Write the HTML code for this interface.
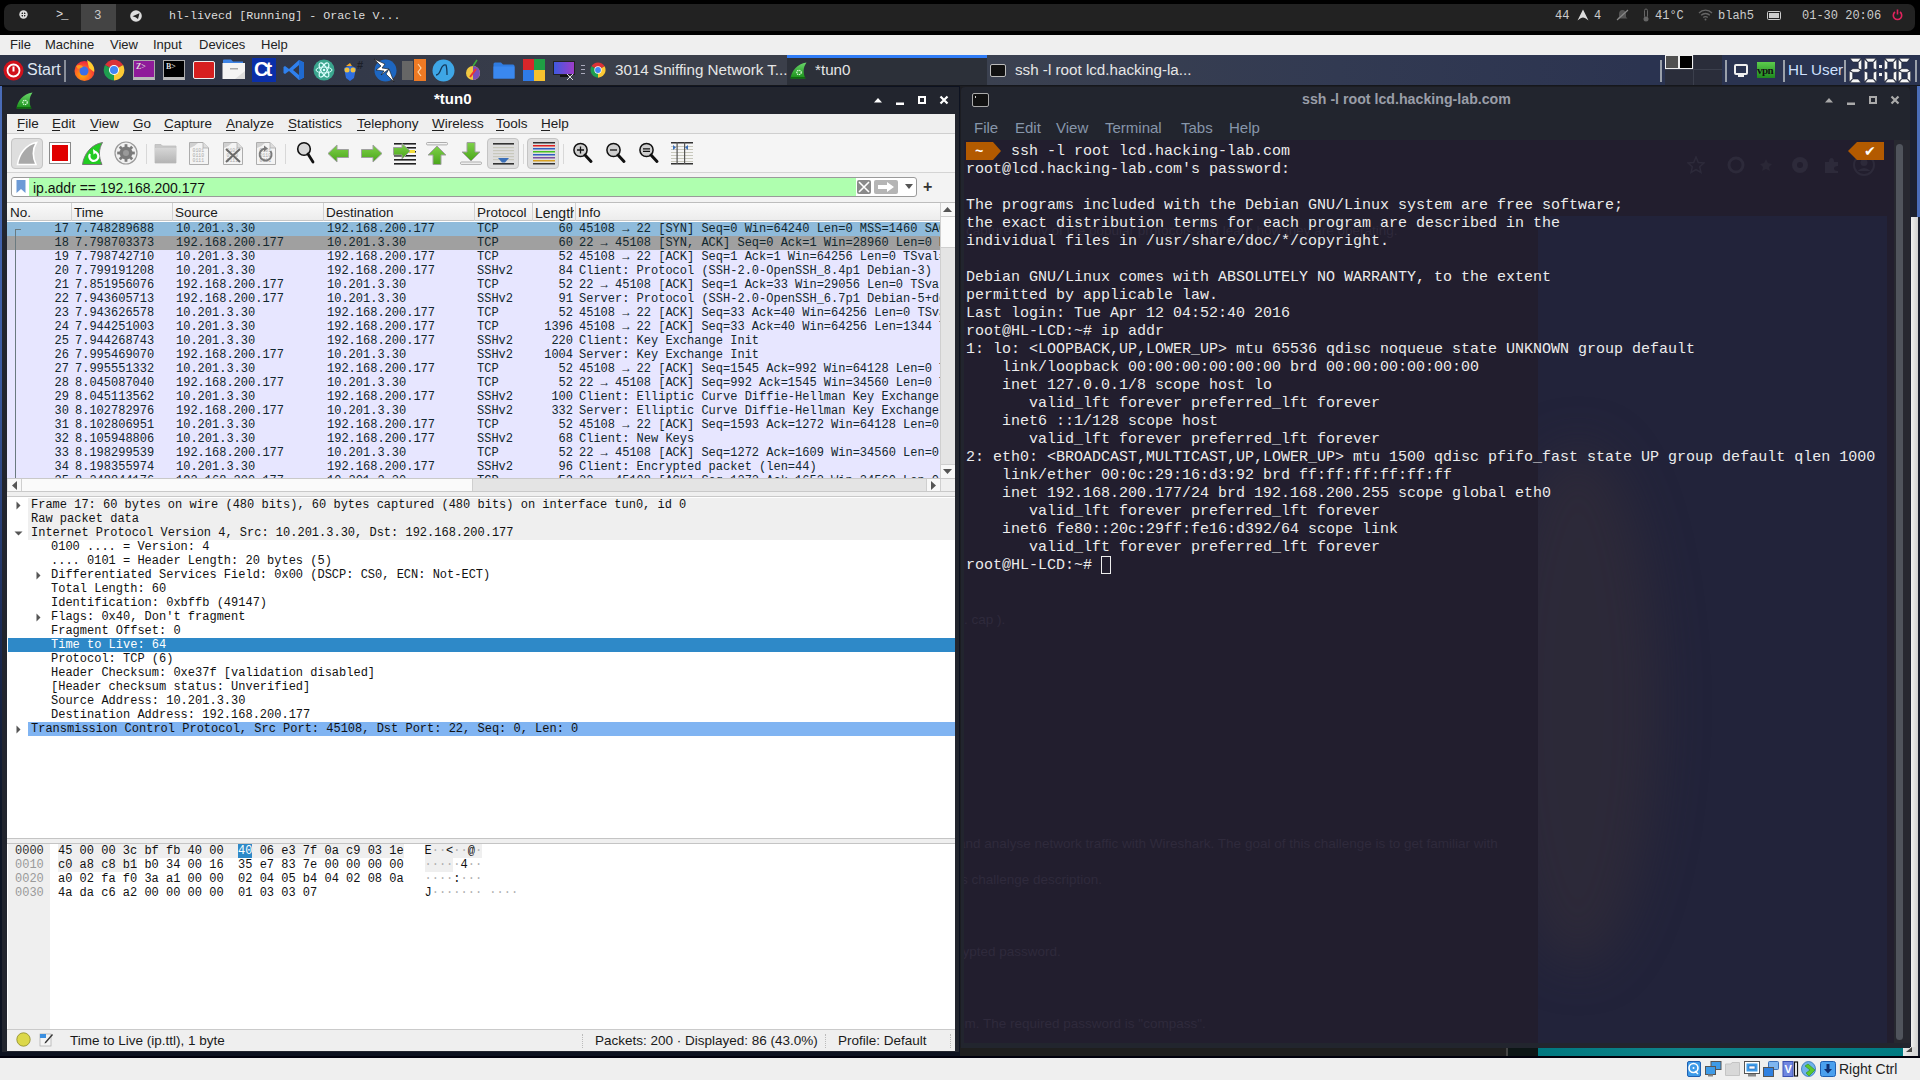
<!DOCTYPE html><html><head><meta charset="utf-8"><style>
html,body{margin:0;padding:0;width:1920px;height:1080px;overflow:hidden;background:#000;}
div{box-sizing:border-box;}
.t{position:absolute;white-space:pre;line-height:1;}
.s{font-family:'Liberation Sans',sans-serif;}
.m{font-family:'Liberation Mono',monospace;}
</style></head><body>

<div style="position:absolute;left:0px;top:0px;width:1920px;height:35px;background:#000"></div>
<div style="position:absolute;left:4px;top:4px;width:1911px;height:27px;background:#222;border-radius:7px"></div>
<div style="position:absolute;left:81px;top:4px;width:35px;height:27px;background:#444"></div>
<div class="t" style="left:94px;top:9px;font:12.5px 'Liberation Mono';color:#ccc">3</div>
<div class="t" style="left:56px;top:8px;font:12px 'Liberation Mono';color:#ddd;letter-spacing:-2px">&gt;_</div>
<svg style="position:absolute;left:19px;top:10px" width="9" height="9" viewBox="0 0 9 9"><circle cx="4.5" cy="4.5" r="4.2" fill="#ddd"/><circle cx="4.5" cy="4.5" r="2.2" fill="#222"/><path d="M4.5 2 L4.5 7 M2 4.5 L7 4.5" stroke="#ddd" stroke-width="1"/></svg>
<svg style="position:absolute;left:130px;top:10px" width="12" height="12" viewBox="0 0 12 12"><circle cx="6" cy="6" r="5.8" fill="#ddd"/><path d="M2.5 6.2 L9.5 3.2 L8 9 L5.5 7.2 Z" fill="#222"/></svg>
<div class="t" style="left:169px;top:9px;font:11.7px 'Liberation Mono';color:#ddd">hl-livecd [Running] - Oracle V...</div>
<div class="t" style="left:1555px;top:9px;font:12px 'Liberation Mono';color:#ccc">44</div>
<svg style="position:absolute;left:1577px;top:9px" width="12" height="12" viewBox="0 0 12 12"><path d="M6 0.5 L11.5 11.5 Q8 8.5 6 8.5 Q4 8.5 0.5 11.5Z" fill="#ddd"/></svg>
<div class="t" style="left:1594px;top:9px;font:12px 'Liberation Mono';color:#ccc">4</div>
<svg style="position:absolute;left:1616px;top:9px" width="13" height="12" viewBox="0 0 13 12"><path d="M6.5 1 C4 1 3 3 3 5 L3 8 L1.5 9.5 L11.5 9.5 L10 8 L10 5 C10 3 9 1 6.5 1Z" fill="#555"/><line x1="1" y1="11" x2="12" y2="1" stroke="#888" stroke-width="1.2"/></svg>
<svg style="position:absolute;left:1642px;top:8px" width="8" height="14" viewBox="0 0 8 14"><rect x="2.5" y="1" width="3" height="9" rx="1.5" fill="none" stroke="#666" stroke-width="1"/><circle cx="4" cy="11" r="2.5" fill="#666"/></svg>
<div class="t" style="left:1655px;top:9px;font:12px 'Liberation Mono';color:#ccc">41°C</div>
<svg style="position:absolute;left:1698px;top:8px" width="15" height="13" viewBox="0 0 15 13"><path d="M1 5 A9 9 0 0 1 14 5" fill="none" stroke="#666" stroke-width="1.3"/><path d="M3.2 7.3 A6 6 0 0 1 11.8 7.3" fill="none" stroke="#666" stroke-width="1.3"/><path d="M5.3 9.5 A3 3 0 0 1 9.7 9.5" fill="none" stroke="#666" stroke-width="1.3"/><circle cx="7.5" cy="11.5" r="1" fill="#666"/></svg>
<div class="t" style="left:1718px;top:9px;font:12px 'Liberation Mono';color:#ccc">blah5</div>
<svg style="position:absolute;left:1767px;top:11px" width="15" height="9" viewBox="0 0 15 9"><rect x="0.5" y="0.5" width="13" height="8" rx="1" fill="none" stroke="#ccc"/><rect x="2" y="2" width="10" height="5" fill="#ccc"/></svg>
<div class="t" style="left:1802px;top:9px;font:12px 'Liberation Mono';color:#ccc">01-30 20:06</div>
<svg style="position:absolute;left:1892px;top:9px" width="11" height="12" viewBox="0 0 11 12"><path d="M3 3 A4.2 4.2 0 1 0 8 3" fill="none" stroke="#e0245e" stroke-width="1.6"/><line x1="5.5" y1="0.5" x2="5.5" y2="5.5" stroke="#e0245e" stroke-width="1.6"/></svg>
<div style="position:absolute;left:0px;top:35px;width:1920px;height:20px;background:#efefef"></div>
<div class="t" style="left:10px;top:37px;font:13px 'Liberation Sans';color:#222">File</div>
<div class="t" style="left:45px;top:37px;font:13px 'Liberation Sans';color:#222">Machine</div>
<div class="t" style="left:110px;top:37px;font:13px 'Liberation Sans';color:#222">View</div>
<div class="t" style="left:153px;top:37px;font:13px 'Liberation Sans';color:#222">Input</div>
<div class="t" style="left:199px;top:37px;font:13px 'Liberation Sans';color:#222">Devices</div>
<div class="t" style="left:261px;top:37px;font:13px 'Liberation Sans';color:#222">Help</div>
<div style="position:absolute;left:0px;top:55px;width:1920px;height:31px;background:linear-gradient(90deg,#2a3145,#2c344a 50%,#2d3650)"></div>
<div style="position:absolute;left:0px;top:55px;width:600px;height:30px;background:linear-gradient(90deg,#2c3347,#333949 60%,#3a3e4a)"></div>
<div style="position:absolute;left:600px;top:55px;width:187px;height:30px;background:#3b3f4a"></div>
<div style="position:absolute;left:787px;top:55px;width:200px;height:30px;background:#2c3039"></div>
<div style="position:absolute;left:787px;top:55px;width:200px;height:3px;background:#2f7cf6"></div>
<div style="position:absolute;left:987px;top:55px;width:700px;height:30px;background:linear-gradient(90deg,#3b4150,#323a52 50%,#2b3350)"></div>
<div style="position:absolute;left:1640px;top:55px;width:280px;height:30px;background:#2a3350"></div>
<div style="position:absolute;left:0px;top:85px;width:1920px;height:2px;background:#15171c"></div>
<svg style="position:absolute;left:3px;top:60px" width="21" height="21" viewBox="0 0 21 21"><circle cx="10.5" cy="10.5" r="10" fill="#d0111b"/><circle cx="10.5" cy="10.5" r="6" fill="none" stroke="#fff" stroke-width="1.8"/><line x1="10.5" y1="6.5" x2="10.5" y2="11.5" stroke="#fff" stroke-width="2"/></svg>
<div class="t" style="left:27px;top:61px;font:16px 'Liberation Sans';color:#dfe6f2">Start</div>
<div style="position:absolute;left:64px;top:60px;width:2px;height:22px;background:#8a8f9a"></div>
<svg style="position:absolute;left:73px;top:58px" width="23" height="24" viewBox="0 0 23 24">
<defs><radialGradient id="ff" cx="0.4" cy="0.7" r="0.7"><stop offset="0" stop-color="#ffb000"/><stop offset="0.6" stop-color="#ff5a2a"/><stop offset="1" stop-color="#e8243f"/></radialGradient></defs>
<circle cx="11.5" cy="13" r="10" fill="url(#ff)"/><circle cx="11" cy="13" r="4.5" fill="#3b6ee8"/><path d="M14 2 C20 5 22 10 21 14 L16 10 Z" fill="#ffcd2e"/><path d="M3 8 C6 6 9 7 10 9 L5 11Z" fill="#ff9a1f"/></svg>
<svg style="position:absolute;left:103px;top:59px" width="22" height="22" viewBox="0 0 22 22">
<path d="M11 11 L2 6 A10.5 10.5 0 0 1 20.1 6 Z" fill="#db3236"/>
<path d="M11 11 L20.1 6 A10.5 10.5 0 0 1 11 21.5 Z" fill="#fcc934"/>
<path d="M11 11 L11 21.5 A10.5 10.5 0 0 1 2 6 Z" fill="#1e9e4f"/>
<circle cx="11" cy="11" r="5" fill="#fff"/><circle cx="11" cy="11" r="4" fill="#4285f4"/></svg>
<div style="position:absolute;left:133px;top:60px;width:22px;height:20px;background:#8f1b9a;border:1px solid #aaa;border-bottom:3px solid #bbb"></div>
<div class="t" style="left:136px;top:62px;font:bold 8px 'Liberation Serif';color:#ddd">Z&gt;</div>
<div style="position:absolute;left:163px;top:60px;width:22px;height:20px;background:#000;border:1px solid #aaa;border-bottom:3px solid #bbb"></div>
<div class="t" style="left:166px;top:62px;font:bold 8px 'Liberation Serif';color:#ddd">B&gt;</div>
<div style="position:absolute;left:193px;top:61px;width:22px;height:18px;background:#d61f1f;border:1px solid #eee;border-radius:2px"></div>
<svg style="position:absolute;left:222px;top:59px" width="24" height="21" viewBox="0 0 24 21"><path d="M1 3 L1 1.5 Q1 0.5 2 0.5 L9 0.5 L11 2.5 L21 2.5 L21 5 L1 5Z" fill="#3e84e6"/><path d="M0.5 4 L23 4 L23 20 L0.5 20Z" fill="#f4f4f4"/><path d="M23 12 L23 20 L13 20Z" fill="#ddd"/><rect x="8" y="9" width="8" height="1.5" fill="#aaa"/></svg>
<div style="position:absolute;left:252px;top:58px;width:24px;height:24px;background:#0a2fa8"></div>
<div class="t" style="left:254px;top:58px;font:bold 20px 'Liberation Sans';color:#fff;letter-spacing:-3px">Ct</div>
<svg style="position:absolute;left:283px;top:59px" width="22" height="22" viewBox="0 0 22 22"><path d="M16 1 L21 3.5 L21 18.5 L16 21 L6 12 L2 15 L0.5 14 L0.5 8 L2 7 L6 10 Z M16 6 L10 11 L16 16 Z" fill="#2f80ed"/><path d="M16 1 L21 3.5 L21 18.5 L16 21Z" fill="#1f6ad0"/></svg>
<svg style="position:absolute;left:313px;top:59px" width="22" height="22" viewBox="0 0 22 22"><circle cx="11" cy="11" r="10.5" fill="#3aa58e"/><ellipse cx="11" cy="11" rx="8" ry="3" fill="none" stroke="#dff" stroke-width="1"/><ellipse cx="11" cy="11" rx="8" ry="3" fill="none" stroke="#dff" stroke-width="1" transform="rotate(60 11 11)"/><ellipse cx="11" cy="11" rx="8" ry="3" fill="none" stroke="#dff" stroke-width="1" transform="rotate(-60 11 11)"/><circle cx="11" cy="11" r="1.3" fill="#dff"/></svg>
<svg style="position:absolute;left:342px;top:58px" width="24" height="24" viewBox="0 0 24 24"><path d="M4 8 L8 5 L10 8 Z" fill="#f5a623"/><path d="M2 10 Q8 6 14 10 L12 20 L8 23 L4 20 Z" fill="#2f6fe0"/><circle cx="5" cy="12" r="2.5" fill="#f0c040"/><circle cx="11" cy="12" r="2.5" fill="#f0c040"/><text x="15" y="11" font-family='Liberation Sans' font-weight="bold" font-size="11" fill="#1c1f28">#</text></svg>
<svg style="position:absolute;left:372px;top:58px" width="25" height="25" viewBox="0 0 25 25"><circle cx="13.5" cy="12.5" r="11" fill="#1d66c1"/><path d="M2 1 L13 6 L10 10 L17 11 L9 17 L12 13 L4 12 L9 8 Z" fill="#fff" stroke="#111" stroke-width="0.6"/><path d="M17 11 L22 24 L14 16Z" fill="#fff" stroke="#111" stroke-width="0.6"/></svg>
<svg style="position:absolute;left:402px;top:58px" width="24" height="24" viewBox="0 0 24 24"><rect x="0" y="3" width="11" height="19" fill="#666"/><rect x="12" y="1" width="12" height="22" fill="#ee7a24"/><path d="M16 6 L19 10 L16 14 L19 18" fill="none" stroke="#ffd7a8" stroke-width="1.2"/></svg>
<svg style="position:absolute;left:432px;top:59px" width="23" height="23" viewBox="0 0 23 23"><circle cx="11.5" cy="11.5" r="11" fill="#3ea6e6"/><path d="M4 16 Q7 16 9 10 Q11 5 14 6 Q15 9 15 16" fill="none" stroke="#143a5c" stroke-width="1.3"/></svg>
<svg style="position:absolute;left:465px;top:58px" width="18" height="24" viewBox="0 0 18 24"><circle cx="8" cy="15" r="7" fill="#f0c842"/><path d="M8 8 A7 7 0 0 1 8 22Z" fill="#7b4fb8"/><path d="M8 8 L12 2" stroke="#3cae3c" stroke-width="1.5"/><path d="M5 19 L11 11" stroke="#e33" stroke-width="2"/></svg>
<svg style="position:absolute;left:493px;top:62px" width="22" height="17" viewBox="0 0 22 17"><path d="M0.5 2 Q0.5 0.5 2 0.5 L8 0.5 L10 2.5 L20 2.5 Q21.5 2.5 21.5 4 L21.5 16.5 L0.5 16.5Z" fill="#2f7be0"/><rect x="0.5" y="4.5" width="21" height="12" fill="#3a88ef"/></svg>
<div style="position:absolute;left:523px;top:59px;width:11px;height:11px;background:#d8262a"></div>
<div style="position:absolute;left:534px;top:59px;width:11px;height:11px;background:#1f9e44"></div>
<div style="position:absolute;left:523px;top:70px;width:11px;height:11px;background:#2f7be8"></div>
<div style="position:absolute;left:534px;top:70px;width:11px;height:11px;background:#f6c12f"></div>
<svg style="position:absolute;left:553px;top:61px" width="23" height="20" viewBox="0 0 23 20"><rect x="0.5" y="0.5" width="21" height="13" fill="url(#mon)" stroke="#222"/><defs><linearGradient id="mon" x1="0" x2="1"><stop offset="0" stop-color="#3c5ae0"/><stop offset="1" stop-color="#a03cc8"/></linearGradient></defs><rect x="7" y="14" width="8" height="2" fill="#111"/><path d="M14 13 L20 19 M20 13 L14 19" stroke="#ddd" stroke-width="1"/></svg>
<div style="position:absolute;left:581px;top:65px;width:4px;height:1px;background:#aab"></div>
<div style="position:absolute;left:581px;top:69px;width:4px;height:1px;background:#aab"></div>
<div style="position:absolute;left:581px;top:73px;width:4px;height:1px;background:#aab"></div>
<svg style="position:absolute;left:590px;top:62px" width="16" height="16" viewBox="0 0 22 22">
<path d="M11 11 L2 6 A10.5 10.5 0 0 1 20.1 6 Z" fill="#db3236"/><path d="M11 11 L20.1 6 A10.5 10.5 0 0 1 11 21.5 Z" fill="#fcc934"/><path d="M11 11 L11 21.5 A10.5 10.5 0 0 1 2 6 Z" fill="#1e9e4f"/><circle cx="11" cy="11" r="5" fill="#fff"/><circle cx="11" cy="11" r="4" fill="#4285f4"/></svg>
<div class="t" style="left:615px;top:61px;font:15.2px 'Liberation Sans';color:#e6e6e6">3014 Sniffing Network T...</div>
<svg style="position:absolute;left:790px;top:62px" width="17" height="17" viewBox="0 0 17 17"><defs><linearGradient id="fin790" x1="0" y1="0" x2="0" y2="1"><stop offset="0" stop-color="#6ad66a"/><stop offset="1" stop-color="#178f17"/></linearGradient></defs><path d="M0.5 16.5 C1.5 9 7 2 16.5 0.5 C13 5.5 12.8 11 15.5 16.5 Z" fill="url(#fin790)"/><path d="M0.5 16.5 L15.5 16.5 L15 15 L1 15Z" fill="#0f6a0f"/><circle cx="9" cy="10.5" r="2.2" fill="none" stroke="#dfffdf" stroke-width="1.2" stroke-dasharray="1.2 0.7"/></svg>
<div class="t" style="left:815px;top:61px;font:15.2px 'Liberation Sans';color:#e6e6e6">*tun0</div>
<div style="position:absolute;left:990px;top:64px;width:16px;height:13px;background:#111;border:1.5px solid #bbb;border-radius:2px"></div>
<div class="t" style="left:1015px;top:61px;font:15.2px 'Liberation Sans';color:#e6e6e6">ssh -l root lcd.hacking-la...</div>
<div style="position:absolute;left:1660px;top:60px;width:2px;height:22px;background:#9aa0aa"></div>
<div style="position:absolute;left:1725px;top:60px;width:2px;height:22px;background:#9aa0aa"></div>
<div style="position:absolute;left:1783px;top:60px;width:2px;height:22px;background:#9aa0aa"></div>
<div style="position:absolute;left:1844px;top:60px;width:2px;height:22px;background:#9aa0aa"></div>
<div style="position:absolute;left:1915px;top:60px;width:2px;height:22px;background:#9aa0aa"></div>
<div style="position:absolute;left:1665px;top:55px;width:57px;height:30px;background:#2a2d3a"></div>
<div style="position:absolute;left:1693px;top:55px;width:1px;height:30px;background:#3b3f4c"></div>
<div style="position:absolute;left:1665px;top:69px;width:57px;height:1px;background:#3b3f4c"></div>
<div style="position:absolute;left:1665px;top:55px;width:14px;height:14px;background:#505050;border:1px solid #eee"></div>
<div style="position:absolute;left:1679px;top:55px;width:14px;height:14px;background:#000;border:1px solid #eee"></div>
<div style="position:absolute;left:1734px;top:64px;width:14px;height:11px;border:2px solid #eee;border-radius:2px"></div>
<div style="position:absolute;left:1738px;top:75px;width:6px;height:2px;background:#eee"></div>
<div style="position:absolute;left:1757px;top:62px;width:18px;height:16px;background:linear-gradient(#5ccc4c,#1f8a1f)"></div>
<div class="t" style="left:1757px;top:64px;font:bold 11px 'Liberation Serif';color:#111;letter-spacing:-0.5px">vpn</div>
<div class="t" style="left:1788px;top:61px;font:15.2px 'Liberation Sans';color:#cfe0ff">HL User</div>
<svg style="position:absolute;left:1849px;top:58px" width="13" height="25" viewBox="0 0 13 25"><path d="M1 0.3 L12 0.3 L9.2 4 L3.8 4Z" fill="#f6f6f6" stroke="#1a1f2e" stroke-width="0.6"/><path d="M12.7 1 L12.7 12 L9.3 10.6 L9.3 4.4Z" fill="#f6f6f6" stroke="#1a1f2e" stroke-width="0.6"/><path d="M1.2 12.5 L3.8 10.7 L9.2 10.7 L11.8 12.5 L9.2 14.3 L3.8 14.3Z" fill="#f6f6f6" stroke="#1a1f2e" stroke-width="0.6"/><path d="M0.3 13 L0.3 24 L3.7 20.6 L3.7 14.4Z" fill="#f6f6f6" stroke="#1a1f2e" stroke-width="0.6"/><path d="M1 24.7 L12 24.7 L9.2 21 L3.8 21Z" fill="#f6f6f6" stroke="#1a1f2e" stroke-width="0.6"/></svg>
<svg style="position:absolute;left:1864px;top:58px" width="13" height="25" viewBox="0 0 13 25"><path d="M1 0.3 L12 0.3 L9.2 4 L3.8 4Z" fill="#f6f6f6" stroke="#1a1f2e" stroke-width="0.6"/><path d="M12.7 1 L12.7 12 L9.3 10.6 L9.3 4.4Z" fill="#f6f6f6" stroke="#1a1f2e" stroke-width="0.6"/><path d="M12.7 13 L12.7 24 L9.3 20.6 L9.3 14.4Z" fill="#f6f6f6" stroke="#1a1f2e" stroke-width="0.6"/><path d="M1 24.7 L12 24.7 L9.2 21 L3.8 21Z" fill="#f6f6f6" stroke="#1a1f2e" stroke-width="0.6"/><path d="M0.3 13 L0.3 24 L3.7 20.6 L3.7 14.4Z" fill="#f6f6f6" stroke="#1a1f2e" stroke-width="0.6"/><path d="M0.3 1 L0.3 12 L3.7 10.6 L3.7 4.4Z" fill="#f6f6f6" stroke="#1a1f2e" stroke-width="0.6"/></svg>
<svg style="position:absolute;left:1884px;top:58px" width="13" height="25" viewBox="0 0 13 25"><path d="M1 0.3 L12 0.3 L9.2 4 L3.8 4Z" fill="#f6f6f6" stroke="#1a1f2e" stroke-width="0.6"/><path d="M12.7 1 L12.7 12 L9.3 10.6 L9.3 4.4Z" fill="#f6f6f6" stroke="#1a1f2e" stroke-width="0.6"/><path d="M12.7 13 L12.7 24 L9.3 20.6 L9.3 14.4Z" fill="#f6f6f6" stroke="#1a1f2e" stroke-width="0.6"/><path d="M1 24.7 L12 24.7 L9.2 21 L3.8 21Z" fill="#f6f6f6" stroke="#1a1f2e" stroke-width="0.6"/><path d="M0.3 13 L0.3 24 L3.7 20.6 L3.7 14.4Z" fill="#f6f6f6" stroke="#1a1f2e" stroke-width="0.6"/><path d="M0.3 1 L0.3 12 L3.7 10.6 L3.7 4.4Z" fill="#f6f6f6" stroke="#1a1f2e" stroke-width="0.6"/></svg>
<svg style="position:absolute;left:1898px;top:58px" width="13" height="25" viewBox="0 0 13 25"><path d="M1 0.3 L12 0.3 L9.2 4 L3.8 4Z" fill="#f6f6f6" stroke="#1a1f2e" stroke-width="0.6"/><path d="M0.3 1 L0.3 12 L3.7 10.6 L3.7 4.4Z" fill="#f6f6f6" stroke="#1a1f2e" stroke-width="0.6"/><path d="M1.2 12.5 L3.8 10.7 L9.2 10.7 L11.8 12.5 L9.2 14.3 L3.8 14.3Z" fill="#f6f6f6" stroke="#1a1f2e" stroke-width="0.6"/><path d="M0.3 13 L0.3 24 L3.7 20.6 L3.7 14.4Z" fill="#f6f6f6" stroke="#1a1f2e" stroke-width="0.6"/><path d="M1 24.7 L12 24.7 L9.2 21 L3.8 21Z" fill="#f6f6f6" stroke="#1a1f2e" stroke-width="0.6"/><path d="M12.7 13 L12.7 24 L9.3 20.6 L9.3 14.4Z" fill="#f6f6f6" stroke="#1a1f2e" stroke-width="0.6"/></svg>
<div style="position:absolute;left:1879px;top:65px;width:3px;height:3px;background:#eee"></div>
<div style="position:absolute;left:1879px;top:73px;width:3px;height:3px;background:#eee"></div>
<div style="position:absolute;left:0px;top:86px;width:2px;height:972px;background:linear-gradient(#4a6cb8,#3a5aa0 30%,#1c2c58 55%,#0e1626 75%,#0c1220)"></div>
<div style="position:absolute;left:2px;top:86px;width:958px;height:972px;background:#0d1220"></div>
<div style="position:absolute;left:2px;top:87px;width:957px;height:965px;background:#22252e"></div>
<svg style="position:absolute;left:16px;top:92px" width="17" height="17" viewBox="0 0 17 17"><defs><linearGradient id="fin16" x1="0" y1="0" x2="0" y2="1"><stop offset="0" stop-color="#6ad66a"/><stop offset="1" stop-color="#178f17"/></linearGradient></defs><path d="M0.5 16.5 C1.5 9 7 2 16.5 0.5 C13 5.5 12.8 11 15.5 16.5 Z" fill="url(#fin16)"/><path d="M0.5 16.5 L15.5 16.5 L15 15 L1 15Z" fill="#0f6a0f"/><circle cx="9" cy="10.5" r="2.2" fill="none" stroke="#dfffdf" stroke-width="1.2" stroke-dasharray="1.2 0.7"/></svg>
<div class="t" style="left:434px;top:90px;font:bold 15px 'Liberation Sans';color:#fff">*tun0</div>
<svg style="position:absolute;left:874px;top:94px" width="80" height="14" viewBox="0 0 80 14"><path d="M0 8.5 L4 4 L8 8.5Z" fill="#fff"/><rect x="22" y="8.5" width="8" height="2.5" fill="#fff"/><rect x="45" y="3" width="6" height="6" fill="none" stroke="#fff" stroke-width="2"/><path d="M66.5 2.5 L73.5 9.5 M73.5 2.5 L66.5 9.5" stroke="#fff" stroke-width="2.2"/></svg>
<div style="position:absolute;left:7px;top:114px;width:948px;height:937px;background:#fff"></div>
<div style="position:absolute;left:7px;top:114px;width:948px;height:20px;background:#efefef;border-bottom:1px solid #cfcfcf"></div>
<div class="t" style="left:17px;top:116px;font:13.5px 'Liberation Sans';color:#202020">File</div>
<div style="position:absolute;left:17px;top:130px;width:7px;height:1px;background:#202020"></div>
<div class="t" style="left:52px;top:116px;font:13.5px 'Liberation Sans';color:#202020">Edit</div>
<div style="position:absolute;left:52px;top:130px;width:8px;height:1px;background:#202020"></div>
<div class="t" style="left:90px;top:116px;font:13.5px 'Liberation Sans';color:#202020">View</div>
<div style="position:absolute;left:90px;top:130px;width:8px;height:1px;background:#202020"></div>
<div class="t" style="left:133px;top:116px;font:13.5px 'Liberation Sans';color:#202020">Go</div>
<div style="position:absolute;left:133px;top:130px;width:9px;height:1px;background:#202020"></div>
<div class="t" style="left:164px;top:116px;font:13.5px 'Liberation Sans';color:#202020">Capture</div>
<div style="position:absolute;left:164px;top:130px;width:9px;height:1px;background:#202020"></div>
<div class="t" style="left:226px;top:116px;font:13.5px 'Liberation Sans';color:#202020">Analyze</div>
<div style="position:absolute;left:226px;top:130px;width:9px;height:1px;background:#202020"></div>
<div class="t" style="left:288px;top:116px;font:13.5px 'Liberation Sans';color:#202020">Statistics</div>
<div style="position:absolute;left:288px;top:130px;width:8px;height:1px;background:#202020"></div>
<div class="t" style="left:357px;top:116px;font:13.5px 'Liberation Sans';color:#202020">Telephony</div>
<div style="position:absolute;left:357px;top:130px;width:8px;height:1px;background:#202020"></div>
<div class="t" style="left:432px;top:116px;font:13.5px 'Liberation Sans';color:#202020">Wireless</div>
<div style="position:absolute;left:432px;top:130px;width:12px;height:1px;background:#202020"></div>
<div class="t" style="left:496px;top:116px;font:13.5px 'Liberation Sans';color:#202020">Tools</div>
<div style="position:absolute;left:496px;top:130px;width:8px;height:1px;background:#202020"></div>
<div class="t" style="left:541px;top:116px;font:13.5px 'Liberation Sans';color:#202020">Help</div>
<div style="position:absolute;left:541px;top:130px;width:9px;height:1px;background:#202020"></div>
<div style="position:absolute;left:7px;top:134px;width:948px;height:39px;background:#f5f5f5;border-bottom:1px solid #d4d4d4"></div>
<div style="position:absolute;left:11px;top:138px;width:32px;height:31px;background:#dedede;border:1px solid #c4c4c4;border-radius:4px"></div>
<div style="position:absolute;left:487px;top:138px;width:32px;height:31px;background:#dedede;border:1px solid #c4c4c4;border-radius:4px"></div>
<div style="position:absolute;left:527px;top:138px;width:32px;height:31px;background:#dedede;border:1px solid #c4c4c4;border-radius:4px"></div>
<svg style="position:absolute;left:16px;top:141px" width="22" height="25" viewBox="0 0 22 25"><path d="M1.5 23.5 C3 13 10 3.5 20.5 1.5 C16.5 8 16.5 16 20 23.5 Z" fill="#a9a9a9" stroke="#fff" stroke-width="1.6"/></svg>
<div style="position:absolute;left:49px;top:142px;width:22px;height:22px;background:#fff;border:1px solid #8a8a8a"></div>
<div style="position:absolute;left:52px;top:145px;width:16px;height:16px;background:#e00000"></div>
<svg style="position:absolute;left:81px;top:141px" width="24" height="25" viewBox="0 0 24 25"><path d="M1.5 23.5 C3 13 10 3.5 21.5 1.5 C17.5 8 17.5 16 21 23.5 Z" fill="#22cc22" stroke="#777" stroke-width="1"/><path d="M9 13 A4.5 4.5 0 1 0 14 11" fill="none" stroke="#fff" stroke-width="2.2"/><path d="M12 8 L16 11 L12.5 13.5Z" fill="#fff"/></svg>
<svg style="position:absolute;left:114px;top:141px" width="24" height="24" viewBox="0 0 24 24"><circle cx="12" cy="12" r="11" fill="#f0f0f0" stroke="#9a9a9a" stroke-width="1.2"/><circle cx="12" cy="12" r="6.5" fill="#7a7a7a"/><rect x="10.6" y="3.2" width="2.8" height="4" fill="#7a7a7a" transform="rotate(0 12 12)"/><rect x="10.6" y="3.2" width="2.8" height="4" fill="#7a7a7a" transform="rotate(45 12 12)"/><rect x="10.6" y="3.2" width="2.8" height="4" fill="#7a7a7a" transform="rotate(90 12 12)"/><rect x="10.6" y="3.2" width="2.8" height="4" fill="#7a7a7a" transform="rotate(135 12 12)"/><rect x="10.6" y="3.2" width="2.8" height="4" fill="#7a7a7a" transform="rotate(180 12 12)"/><rect x="10.6" y="3.2" width="2.8" height="4" fill="#7a7a7a" transform="rotate(225 12 12)"/><rect x="10.6" y="3.2" width="2.8" height="4" fill="#7a7a7a" transform="rotate(270 12 12)"/><rect x="10.6" y="3.2" width="2.8" height="4" fill="#7a7a7a" transform="rotate(315 12 12)"/><circle cx="12" cy="12" r="3" fill="#9a9a9a"/></svg>
<div style="position:absolute;left:146px;top:144px;width:1px;height:20px;background:#d8d8d8"></div>
<svg style="position:absolute;left:154px;top:143px" width="24" height="21" viewBox="0 0 24 21"><defs><linearGradient id="fg" x1="0" y1="0" x2="0" y2="1"><stop offset="0" stop-color="#d6d6d6"/><stop offset="1" stop-color="#b4b4b4"/></linearGradient></defs><path d="M1 3 L1 1.5 L7 1.5 L8.5 3 L22 3 L22 20 L1 20Z" fill="#c8c8c8" stroke="#bdbdbd" stroke-width="0.8"/><rect x="1" y="5" width="21" height="15" fill="url(#fg)"/></svg>
<svg style="position:absolute;left:188px;top:141px" width="22" height="25" viewBox="0 0 22 25"><path d="M1.5 1.5 L15 1.5 L20.5 7 L20.5 23.5 L1.5 23.5Z" fill="#f4f4f4" stroke="#adadad" stroke-width="1"/><path d="M15 1.5 L15 7 L20.5 7" fill="#ddd" stroke="#adadad" stroke-width="0.8"/><path d="M2 2 L10 2 Q6 6 2 7Z" fill="#d0d0d0"/><text x="4.5" y="11" font-family='Liberation Mono' font-size="4.8" fill="#aaa">0101</text><text x="4.5" y="16" font-family='Liberation Mono' font-size="4.8" fill="#aaa">0110</text><text x="4.5" y="21" font-family='Liberation Mono' font-size="4.8" fill="#aaa">0111</text></svg>
<svg style="position:absolute;left:222px;top:141px" width="22" height="25" viewBox="0 0 22 25"><path d="M1.5 1.5 L15 1.5 L20.5 7 L20.5 23.5 L1.5 23.5Z" fill="#f4f4f4" stroke="#adadad" stroke-width="1"/><path d="M15 1.5 L15 7 L20.5 7" fill="#ddd" stroke="#adadad" stroke-width="0.8"/><path d="M2 2 L10 2 Q6 6 2 7Z" fill="#d0d0d0"/><text x="4.5" y="11" font-family='Liberation Mono' font-size="4.8" fill="#aaa">0101</text><text x="4.5" y="16" font-family='Liberation Mono' font-size="4.8" fill="#aaa">0110</text><text x="4.5" y="21" font-family='Liberation Mono' font-size="4.8" fill="#aaa">0111</text><path d="M4 8 L18 21 M18 8 L4 21" stroke="#6a6a6a" stroke-width="2"/></svg>
<svg style="position:absolute;left:255px;top:141px" width="22" height="25" viewBox="0 0 22 25"><path d="M1.5 1.5 L15 1.5 L20.5 7 L20.5 23.5 L1.5 23.5Z" fill="#f4f4f4" stroke="#adadad" stroke-width="1"/><path d="M15 1.5 L15 7 L20.5 7" fill="#ddd" stroke="#adadad" stroke-width="0.8"/><path d="M2 2 L10 2 Q6 6 2 7Z" fill="#d0d0d0"/><text x="4.5" y="11" font-family='Liberation Mono' font-size="4.8" fill="#aaa">0101</text><text x="4.5" y="16" font-family='Liberation Mono' font-size="4.8" fill="#aaa">0110</text><text x="4.5" y="21" font-family='Liberation Mono' font-size="4.8" fill="#aaa">0111</text><path d="M15.5 10 A6 6 0 1 1 10 7.5" fill="none" stroke="#7a7a7a" stroke-width="2"/><path d="M9 4.5 L13 7.5 L9 10.5Z" fill="#7a7a7a"/></svg>
<div style="position:absolute;left:285px;top:144px;width:1px;height:20px;background:#d8d8d8"></div>
<svg style="position:absolute;left:296px;top:141px" width="19" height="24" viewBox="0 0 19 24"><circle cx="8" cy="8" r="6.3" fill="#d8d8d8" stroke="#111" stroke-width="1.6"/><path d="M12 13 L17 21" stroke="#111" stroke-width="2.8" stroke-linecap="round"/></svg>
<svg style="position:absolute;left:327px;top:144px" width="23" height="19" viewBox="0 0 23 19"><defs><linearGradient id="ga" x1="0" y1="0" x2="0" y2="1"><stop offset="0" stop-color="#7fd14a"/><stop offset="1" stop-color="#4aa61a"/></linearGradient></defs><path d="M1 9.5 L10 1 L10 5.5 L21.5 5.5 L21.5 13.5 L10 13.5 L10 18 Z" fill="url(#ga)" stroke="#a0a0a0" stroke-width="1"/></svg>
<svg style="position:absolute;left:360px;top:144px" width="23" height="19" viewBox="0 0 23 19"><path d="M22 9.5 L13 1 L13 5.5 L1.5 5.5 L1.5 13.5 L13 13.5 L13 18 Z" fill="url(#ga)" stroke="#a0a0a0" stroke-width="1"/></svg>
<svg style="position:absolute;left:392px;top:141px" width="25" height="25" viewBox="0 0 25 25"><rect x="2" y="2" width="22" height="1.6" fill="#222"/><rect x="2" y="6" width="22" height="1.6" fill="#222"/><rect x="2" y="10" width="22" height="1.6" fill="#222"/><rect x="2" y="14" width="22" height="1.6" fill="#222"/><rect x="2" y="18" width="22" height="1.6" fill="#222"/><rect x="2" y="22" width="22" height="1.6" fill="#222"/><rect x="17" y="9" width="6" height="3" fill="#f3dd3a"/><path d="M18 9 L10 1.5 L10 5.5 L1.5 5.5 L1.5 13 L10 13 L10 17 Z" fill="url(#ga)" stroke="#a0a0a0" stroke-width="1" transform="translate(0,1)"/></svg>
<svg style="position:absolute;left:425px;top:141px" width="24" height="25" viewBox="0 0 24 25"><rect x="1.5" y="1.5" width="21" height="2.4" rx="1" fill="#f4f4f4" stroke="#9a9a9a" stroke-width="0.8"/><path d="M12 5 L21 14 L16 14 L16 23.5 L8 23.5 L8 14 L3 14Z" fill="url(#ga)" stroke="#a0a0a0" stroke-width="1"/></svg>
<svg style="position:absolute;left:459px;top:141px" width="24" height="25" viewBox="0 0 24 25"><rect x="1.5" y="21" width="21" height="2.4" rx="1" fill="#f4f4f4" stroke="#9a9a9a" stroke-width="0.8"/><path d="M12 20 L21 11 L16 11 L16 1.5 L8 1.5 L8 11 L3 11Z" fill="url(#ga)" stroke="#a0a0a0" stroke-width="1"/></svg>
<svg style="position:absolute;left:491px;top:141px" width="24" height="25" viewBox="0 0 24 25"><rect x="2" y="2" width="21" height="1.6" fill="#333"/><rect x="2" y="6" width="21" height="1.2" fill="#c8c8bc"/><rect x="2" y="9" width="21" height="1.2" fill="#c8c8bc"/><rect x="2" y="12" width="21" height="1.2" fill="#c8c8bc"/><rect x="2" y="15" width="21" height="1.2" fill="#c8c8bc"/><rect x="2" y="18" width="21" height="1.2" fill="#c8c8bc"/><rect x="2" y="22" width="21" height="1.6" fill="#333"/><path d="M7 17 L18 17 L14 21.5 L11 21.5Z" fill="#3a6fb8"/></svg>
<div style="position:absolute;left:523px;top:144px;width:1px;height:20px;background:#d8d8d8"></div>
<svg style="position:absolute;left:531px;top:141px" width="24" height="25" viewBox="0 0 24 25"><rect x="2" y="1" width="22" height="1.5" fill="#333"/><rect x="2" y="4" width="22" height="1.5" fill="#e02020"/><rect x="2" y="7" width="22" height="1.5" fill="#2f5fc0"/><rect x="2" y="10" width="22" height="1.5" fill="#48c020"/><rect x="2" y="13" width="22" height="1.5" fill="#2f5fc0"/><rect x="2" y="16" width="22" height="1.5" fill="#7a4fa0"/><rect x="2" y="19" width="22" height="1.5" fill="#d8a020"/><rect x="2" y="22" width="22" height="1.5" fill="#333"/></svg>
<div style="position:absolute;left:563px;top:144px;width:1px;height:20px;background:#d8d8d8"></div>
<svg style="position:absolute;left:572px;top:141px" width="24" height="25" viewBox="0 0 24 25"><circle cx="8.5" cy="9" r="6.6" fill="#cfcfcf" stroke="#111" stroke-width="1.5"/><path d="M5 9 L12 9 M8.5 5.5 L8.5 12.5" stroke="#111" stroke-width="1.3"/><path d="M13 14 L19 20.5" stroke="#111" stroke-width="3" stroke-linecap="round"/></svg>
<svg style="position:absolute;left:605px;top:141px" width="24" height="25" viewBox="0 0 24 25"><circle cx="8.5" cy="9" r="6.6" fill="#cfcfcf" stroke="#111" stroke-width="1.5"/><path d="M5 9 L12 9" stroke="#111" stroke-width="1.3"/><path d="M13 14 L19 20.5" stroke="#111" stroke-width="3" stroke-linecap="round"/></svg>
<svg style="position:absolute;left:638px;top:141px" width="24" height="25" viewBox="0 0 24 25"><circle cx="8.5" cy="9" r="6.6" fill="#cfcfcf" stroke="#111" stroke-width="1.5"/><path d="M5 7.8 L12 7.8 M5 10.3 L12 10.3" stroke="#111" stroke-width="1.2"/><path d="M13 14 L19 20.5" stroke="#111" stroke-width="3" stroke-linecap="round"/></svg>
<svg style="position:absolute;left:671px;top:141px" width="22" height="24" viewBox="0 0 22 24"><rect x="0" y="5" width="22" height="1" fill="#c8c8bc"/><rect x="0" y="8" width="22" height="1" fill="#c8c8bc"/><rect x="0" y="11" width="22" height="1" fill="#c8c8bc"/><rect x="0" y="14" width="22" height="1" fill="#c8c8bc"/><rect x="0" y="17" width="22" height="1" fill="#c8c8bc"/><rect x="0" y="20" width="22" height="1" fill="#c8c8bc"/><rect x="0" y="1" width="22" height="1.5" fill="#333"/><rect x="0" y="22" width="22" height="1.5" fill="#333"/><rect x="5.5" y="1" width="1.2" height="22" fill="#555"/><rect x="13" y="1" width="1.2" height="22" fill="#555"/><path d="M2 4 L5 6.5 L2 9Z" fill="#3a6fb8"/><path d="M17 4 L14 6.5 L17 9Z" fill="#3a6fb8"/></svg>
<div style="position:absolute;left:7px;top:173px;width:948px;height:30px;background:#f3f3f3"></div>
<div style="position:absolute;left:11px;top:177px;width:906px;height:20px;background:#fff;border:1px solid #9a9a9a;border-radius:3px"></div>
<div style="position:absolute;left:29px;top:178px;width:827px;height:18px;background:#afffaf"></div>
<svg style="position:absolute;left:15px;top:179px" width="12" height="15" viewBox="0 0 12 15"><path d="M1.5 1 L10.5 1 L10.5 14 L6 10 L1.5 14Z" fill="#6c9ad6"/></svg>
<div class="t" style="left:33px;top:180px;font:14px 'Liberation Sans';color:#111">ip.addr == 192.168.200.177</div>
<div style="position:absolute;left:857px;top:180px;width:14px;height:14px;background:#8a8a8a;border-radius:2px"></div>
<svg style="position:absolute;left:857px;top:180px" width="14" height="14" viewBox="0 0 14 14"><path d="M2 2 L12 12 M12 2 L2 12" stroke="#fff" stroke-width="1.6"/></svg>
<div style="position:absolute;left:874px;top:180px;width:24px;height:14px;background:#b5b5b5;border-radius:2px"></div>
<svg style="position:absolute;left:876px;top:181px" width="20" height="12" viewBox="0 0 20 12"><path d="M2 4 L11 4 L11 1 L18 6 L11 11 L11 8 L2 8Z" fill="#fff"/></svg>
<svg style="position:absolute;left:905px;top:184px" width="8" height="5" viewBox="0 0 8 5"><path d="M0 0 L8 0 L4 5Z" fill="#555"/></svg>
<div class="t" style="left:923px;top:178px;font:bold 16px 'Liberation Sans';color:#333">+</div>
<div style="position:absolute;left:7px;top:202px;width:948px;height:1px;background:#bdbdbd"></div>
<div style="position:absolute;left:7px;top:203px;width:933px;height:18px;background:linear-gradient(#fafafa,#ececec);border-bottom:1px solid #c6c6c6"></div>
<div style="position:absolute;left:71px;top:203px;width:1px;height:18px;background:#d2d2d2"></div>
<div style="position:absolute;left:172px;top:203px;width:1px;height:18px;background:#d2d2d2"></div>
<div style="position:absolute;left:323px;top:203px;width:1px;height:18px;background:#d2d2d2"></div>
<div style="position:absolute;left:474px;top:203px;width:1px;height:18px;background:#d2d2d2"></div>
<div style="position:absolute;left:532px;top:203px;width:1px;height:18px;background:#d2d2d2"></div>
<div style="position:absolute;left:575px;top:203px;width:1px;height:18px;background:#d2d2d2"></div>
<div class="t" style="left:10px;top:205px;font:13.5px 'Liberation Sans';color:#1a1a1a">No.</div>
<div class="t" style="left:74px;top:205px;font:13.5px 'Liberation Sans';color:#1a1a1a">Time</div>
<div class="t" style="left:175px;top:205px;font:13.5px 'Liberation Sans';color:#1a1a1a">Source</div>
<div class="t" style="left:326px;top:205px;font:13.5px 'Liberation Sans';color:#1a1a1a">Destination</div>
<div class="t" style="left:477px;top:205px;font:13.5px 'Liberation Sans';color:#1a1a1a">Protocol</div>
<div class="t" style="left:535px;top:205px;font:13.5px 'Liberation Sans';color:#1a1a1a"></div>
<div class="t" style="left:578px;top:205px;font:13.5px 'Liberation Sans';color:#1a1a1a">Info</div>
<div class="t" style="left:535px;top:205px;width:39px;overflow:hidden;font:13.5px 'Liberation Sans';color:#1a1a1a;font-size:14px">Length</div>
<div style="position:absolute;left:7px;top:221px;width:933px;height:257px;overflow:hidden">
<div style="position:absolute;left:0;top:1px;width:933px;height:14px;background:#8fbbdb"></div>
<div class="t" style="left:22px;top:1px;width:40px;text-align:right;font:12px 'Liberation Mono';color:#12272e">17</div>
<div class="t" style="left:68px;top:1px;font:12px 'Liberation Mono';color:#12272e">7.748289688</div>
<div class="t" style="left:169px;top:1px;font:12px 'Liberation Mono';color:#12272e">10.201.3.30</div>
<div class="t" style="left:320px;top:1px;font:12px 'Liberation Mono';color:#12272e">192.168.200.177</div>
<div class="t" style="left:470px;top:1px;font:12px 'Liberation Mono';color:#12272e">TCP</div>
<div class="t" style="left:526px;top:1px;width:40px;text-align:right;font:12px 'Liberation Mono';color:#12272e">60</div>
<div class="t" style="left:572px;top:1px;width:361px;overflow:hidden;font:12px 'Liberation Mono';color:#12272e">45108 → 22 [SYN] Seq=0 Win=64240 Len=0 MSS=1460 SACK_PERM=1</div>
<div style="position:absolute;left:0;top:15px;width:933px;height:14px;background:#a0a0a0"></div>
<div class="t" style="left:22px;top:15px;width:40px;text-align:right;font:12px 'Liberation Mono';color:#12272e">18</div>
<div class="t" style="left:68px;top:15px;font:12px 'Liberation Mono';color:#12272e">7.798703373</div>
<div class="t" style="left:169px;top:15px;font:12px 'Liberation Mono';color:#12272e">192.168.200.177</div>
<div class="t" style="left:320px;top:15px;font:12px 'Liberation Mono';color:#12272e">10.201.3.30</div>
<div class="t" style="left:470px;top:15px;font:12px 'Liberation Mono';color:#12272e">TCP</div>
<div class="t" style="left:526px;top:15px;width:40px;text-align:right;font:12px 'Liberation Mono';color:#12272e">60</div>
<div class="t" style="left:572px;top:15px;width:361px;overflow:hidden;font:12px 'Liberation Mono';color:#12272e">22 → 45108 [SYN, ACK] Seq=0 Ack=1 Win=28960 Len=0 MSS=1460</div>
<div style="position:absolute;left:0;top:29px;width:933px;height:14px;background:#e7e6ff"></div>
<div class="t" style="left:22px;top:29px;width:40px;text-align:right;font:12px 'Liberation Mono';color:#12272e">19</div>
<div class="t" style="left:68px;top:29px;font:12px 'Liberation Mono';color:#12272e">7.798742710</div>
<div class="t" style="left:169px;top:29px;font:12px 'Liberation Mono';color:#12272e">10.201.3.30</div>
<div class="t" style="left:320px;top:29px;font:12px 'Liberation Mono';color:#12272e">192.168.200.177</div>
<div class="t" style="left:470px;top:29px;font:12px 'Liberation Mono';color:#12272e">TCP</div>
<div class="t" style="left:526px;top:29px;width:40px;text-align:right;font:12px 'Liberation Mono';color:#12272e">52</div>
<div class="t" style="left:572px;top:29px;width:361px;overflow:hidden;font:12px 'Liberation Mono';color:#12272e">45108 → 22 [ACK] Seq=1 Ack=1 Win=64256 Len=0 TSval=1</div>
<div style="position:absolute;left:0;top:43px;width:933px;height:14px;background:#e7e6ff"></div>
<div class="t" style="left:22px;top:43px;width:40px;text-align:right;font:12px 'Liberation Mono';color:#12272e">20</div>
<div class="t" style="left:68px;top:43px;font:12px 'Liberation Mono';color:#12272e">7.799191208</div>
<div class="t" style="left:169px;top:43px;font:12px 'Liberation Mono';color:#12272e">10.201.3.30</div>
<div class="t" style="left:320px;top:43px;font:12px 'Liberation Mono';color:#12272e">192.168.200.177</div>
<div class="t" style="left:470px;top:43px;font:12px 'Liberation Mono';color:#12272e">SSHv2</div>
<div class="t" style="left:526px;top:43px;width:40px;text-align:right;font:12px 'Liberation Mono';color:#12272e">84</div>
<div class="t" style="left:572px;top:43px;width:361px;overflow:hidden;font:12px 'Liberation Mono';color:#12272e">Client: Protocol (SSH-2.0-OpenSSH_8.4p1 Debian-3)</div>
<div style="position:absolute;left:0;top:57px;width:933px;height:14px;background:#e7e6ff"></div>
<div class="t" style="left:22px;top:57px;width:40px;text-align:right;font:12px 'Liberation Mono';color:#12272e">21</div>
<div class="t" style="left:68px;top:57px;font:12px 'Liberation Mono';color:#12272e">7.851956076</div>
<div class="t" style="left:169px;top:57px;font:12px 'Liberation Mono';color:#12272e">192.168.200.177</div>
<div class="t" style="left:320px;top:57px;font:12px 'Liberation Mono';color:#12272e">10.201.3.30</div>
<div class="t" style="left:470px;top:57px;font:12px 'Liberation Mono';color:#12272e">TCP</div>
<div class="t" style="left:526px;top:57px;width:40px;text-align:right;font:12px 'Liberation Mono';color:#12272e">52</div>
<div class="t" style="left:572px;top:57px;width:361px;overflow:hidden;font:12px 'Liberation Mono';color:#12272e">22 → 45108 [ACK] Seq=1 Ack=33 Win=29056 Len=0 TSval=1</div>
<div style="position:absolute;left:0;top:71px;width:933px;height:14px;background:#e7e6ff"></div>
<div class="t" style="left:22px;top:71px;width:40px;text-align:right;font:12px 'Liberation Mono';color:#12272e">22</div>
<div class="t" style="left:68px;top:71px;font:12px 'Liberation Mono';color:#12272e">7.943605713</div>
<div class="t" style="left:169px;top:71px;font:12px 'Liberation Mono';color:#12272e">192.168.200.177</div>
<div class="t" style="left:320px;top:71px;font:12px 'Liberation Mono';color:#12272e">10.201.3.30</div>
<div class="t" style="left:470px;top:71px;font:12px 'Liberation Mono';color:#12272e">SSHv2</div>
<div class="t" style="left:526px;top:71px;width:40px;text-align:right;font:12px 'Liberation Mono';color:#12272e">91</div>
<div class="t" style="left:572px;top:71px;width:361px;overflow:hidden;font:12px 'Liberation Mono';color:#12272e">Server: Protocol (SSH-2.0-OpenSSH_6.7p1 Debian-5+deb8u</div>
<div style="position:absolute;left:0;top:85px;width:933px;height:14px;background:#e7e6ff"></div>
<div class="t" style="left:22px;top:85px;width:40px;text-align:right;font:12px 'Liberation Mono';color:#12272e">23</div>
<div class="t" style="left:68px;top:85px;font:12px 'Liberation Mono';color:#12272e">7.943626578</div>
<div class="t" style="left:169px;top:85px;font:12px 'Liberation Mono';color:#12272e">10.201.3.30</div>
<div class="t" style="left:320px;top:85px;font:12px 'Liberation Mono';color:#12272e">192.168.200.177</div>
<div class="t" style="left:470px;top:85px;font:12px 'Liberation Mono';color:#12272e">TCP</div>
<div class="t" style="left:526px;top:85px;width:40px;text-align:right;font:12px 'Liberation Mono';color:#12272e">52</div>
<div class="t" style="left:572px;top:85px;width:361px;overflow:hidden;font:12px 'Liberation Mono';color:#12272e">45108 → 22 [ACK] Seq=33 Ack=40 Win=64256 Len=0 TSval=1</div>
<div style="position:absolute;left:0;top:99px;width:933px;height:14px;background:#e7e6ff"></div>
<div class="t" style="left:22px;top:99px;width:40px;text-align:right;font:12px 'Liberation Mono';color:#12272e">24</div>
<div class="t" style="left:68px;top:99px;font:12px 'Liberation Mono';color:#12272e">7.944251003</div>
<div class="t" style="left:169px;top:99px;font:12px 'Liberation Mono';color:#12272e">10.201.3.30</div>
<div class="t" style="left:320px;top:99px;font:12px 'Liberation Mono';color:#12272e">192.168.200.177</div>
<div class="t" style="left:470px;top:99px;font:12px 'Liberation Mono';color:#12272e">TCP</div>
<div class="t" style="left:526px;top:99px;width:40px;text-align:right;font:12px 'Liberation Mono';color:#12272e">1396</div>
<div class="t" style="left:572px;top:99px;width:361px;overflow:hidden;font:12px 'Liberation Mono';color:#12272e">45108 → 22 [ACK] Seq=33 Ack=40 Win=64256 Len=1344 TSval</div>
<div style="position:absolute;left:0;top:113px;width:933px;height:14px;background:#e7e6ff"></div>
<div class="t" style="left:22px;top:113px;width:40px;text-align:right;font:12px 'Liberation Mono';color:#12272e">25</div>
<div class="t" style="left:68px;top:113px;font:12px 'Liberation Mono';color:#12272e">7.944268743</div>
<div class="t" style="left:169px;top:113px;font:12px 'Liberation Mono';color:#12272e">10.201.3.30</div>
<div class="t" style="left:320px;top:113px;font:12px 'Liberation Mono';color:#12272e">192.168.200.177</div>
<div class="t" style="left:470px;top:113px;font:12px 'Liberation Mono';color:#12272e">SSHv2</div>
<div class="t" style="left:526px;top:113px;width:40px;text-align:right;font:12px 'Liberation Mono';color:#12272e">220</div>
<div class="t" style="left:572px;top:113px;width:361px;overflow:hidden;font:12px 'Liberation Mono';color:#12272e">Client: Key Exchange Init</div>
<div style="position:absolute;left:0;top:127px;width:933px;height:14px;background:#e7e6ff"></div>
<div class="t" style="left:22px;top:127px;width:40px;text-align:right;font:12px 'Liberation Mono';color:#12272e">26</div>
<div class="t" style="left:68px;top:127px;font:12px 'Liberation Mono';color:#12272e">7.995469070</div>
<div class="t" style="left:169px;top:127px;font:12px 'Liberation Mono';color:#12272e">192.168.200.177</div>
<div class="t" style="left:320px;top:127px;font:12px 'Liberation Mono';color:#12272e">10.201.3.30</div>
<div class="t" style="left:470px;top:127px;font:12px 'Liberation Mono';color:#12272e">SSHv2</div>
<div class="t" style="left:526px;top:127px;width:40px;text-align:right;font:12px 'Liberation Mono';color:#12272e">1004</div>
<div class="t" style="left:572px;top:127px;width:361px;overflow:hidden;font:12px 'Liberation Mono';color:#12272e">Server: Key Exchange Init</div>
<div style="position:absolute;left:0;top:141px;width:933px;height:14px;background:#e7e6ff"></div>
<div class="t" style="left:22px;top:141px;width:40px;text-align:right;font:12px 'Liberation Mono';color:#12272e">27</div>
<div class="t" style="left:68px;top:141px;font:12px 'Liberation Mono';color:#12272e">7.995551332</div>
<div class="t" style="left:169px;top:141px;font:12px 'Liberation Mono';color:#12272e">10.201.3.30</div>
<div class="t" style="left:320px;top:141px;font:12px 'Liberation Mono';color:#12272e">192.168.200.177</div>
<div class="t" style="left:470px;top:141px;font:12px 'Liberation Mono';color:#12272e">TCP</div>
<div class="t" style="left:526px;top:141px;width:40px;text-align:right;font:12px 'Liberation Mono';color:#12272e">52</div>
<div class="t" style="left:572px;top:141px;width:361px;overflow:hidden;font:12px 'Liberation Mono';color:#12272e">45108 → 22 [ACK] Seq=1545 Ack=992 Win=64128 Len=0 TSval</div>
<div style="position:absolute;left:0;top:155px;width:933px;height:14px;background:#e7e6ff"></div>
<div class="t" style="left:22px;top:155px;width:40px;text-align:right;font:12px 'Liberation Mono';color:#12272e">28</div>
<div class="t" style="left:68px;top:155px;font:12px 'Liberation Mono';color:#12272e">8.045087040</div>
<div class="t" style="left:169px;top:155px;font:12px 'Liberation Mono';color:#12272e">192.168.200.177</div>
<div class="t" style="left:320px;top:155px;font:12px 'Liberation Mono';color:#12272e">10.201.3.30</div>
<div class="t" style="left:470px;top:155px;font:12px 'Liberation Mono';color:#12272e">TCP</div>
<div class="t" style="left:526px;top:155px;width:40px;text-align:right;font:12px 'Liberation Mono';color:#12272e">52</div>
<div class="t" style="left:572px;top:155px;width:361px;overflow:hidden;font:12px 'Liberation Mono';color:#12272e">22 → 45108 [ACK] Seq=992 Ack=1545 Win=34560 Len=0 TSval</div>
<div style="position:absolute;left:0;top:169px;width:933px;height:14px;background:#e7e6ff"></div>
<div class="t" style="left:22px;top:169px;width:40px;text-align:right;font:12px 'Liberation Mono';color:#12272e">29</div>
<div class="t" style="left:68px;top:169px;font:12px 'Liberation Mono';color:#12272e">8.045113562</div>
<div class="t" style="left:169px;top:169px;font:12px 'Liberation Mono';color:#12272e">10.201.3.30</div>
<div class="t" style="left:320px;top:169px;font:12px 'Liberation Mono';color:#12272e">192.168.200.177</div>
<div class="t" style="left:470px;top:169px;font:12px 'Liberation Mono';color:#12272e">SSHv2</div>
<div class="t" style="left:526px;top:169px;width:40px;text-align:right;font:12px 'Liberation Mono';color:#12272e">100</div>
<div class="t" style="left:572px;top:169px;width:361px;overflow:hidden;font:12px 'Liberation Mono';color:#12272e">Client: Elliptic Curve Diffie-Hellman Key Exchange Init</div>
<div style="position:absolute;left:0;top:183px;width:933px;height:14px;background:#e7e6ff"></div>
<div class="t" style="left:22px;top:183px;width:40px;text-align:right;font:12px 'Liberation Mono';color:#12272e">30</div>
<div class="t" style="left:68px;top:183px;font:12px 'Liberation Mono';color:#12272e">8.102782976</div>
<div class="t" style="left:169px;top:183px;font:12px 'Liberation Mono';color:#12272e">192.168.200.177</div>
<div class="t" style="left:320px;top:183px;font:12px 'Liberation Mono';color:#12272e">10.201.3.30</div>
<div class="t" style="left:470px;top:183px;font:12px 'Liberation Mono';color:#12272e">SSHv2</div>
<div class="t" style="left:526px;top:183px;width:40px;text-align:right;font:12px 'Liberation Mono';color:#12272e">332</div>
<div class="t" style="left:572px;top:183px;width:361px;overflow:hidden;font:12px 'Liberation Mono';color:#12272e">Server: Elliptic Curve Diffie-Hellman Key Exchange Reply</div>
<div style="position:absolute;left:0;top:197px;width:933px;height:14px;background:#e7e6ff"></div>
<div class="t" style="left:22px;top:197px;width:40px;text-align:right;font:12px 'Liberation Mono';color:#12272e">31</div>
<div class="t" style="left:68px;top:197px;font:12px 'Liberation Mono';color:#12272e">8.102806951</div>
<div class="t" style="left:169px;top:197px;font:12px 'Liberation Mono';color:#12272e">10.201.3.30</div>
<div class="t" style="left:320px;top:197px;font:12px 'Liberation Mono';color:#12272e">192.168.200.177</div>
<div class="t" style="left:470px;top:197px;font:12px 'Liberation Mono';color:#12272e">TCP</div>
<div class="t" style="left:526px;top:197px;width:40px;text-align:right;font:12px 'Liberation Mono';color:#12272e">52</div>
<div class="t" style="left:572px;top:197px;width:361px;overflow:hidden;font:12px 'Liberation Mono';color:#12272e">45108 → 22 [ACK] Seq=1593 Ack=1272 Win=64128 Len=0 TSv</div>
<div style="position:absolute;left:0;top:211px;width:933px;height:14px;background:#e7e6ff"></div>
<div class="t" style="left:22px;top:211px;width:40px;text-align:right;font:12px 'Liberation Mono';color:#12272e">32</div>
<div class="t" style="left:68px;top:211px;font:12px 'Liberation Mono';color:#12272e">8.105948806</div>
<div class="t" style="left:169px;top:211px;font:12px 'Liberation Mono';color:#12272e">10.201.3.30</div>
<div class="t" style="left:320px;top:211px;font:12px 'Liberation Mono';color:#12272e">192.168.200.177</div>
<div class="t" style="left:470px;top:211px;font:12px 'Liberation Mono';color:#12272e">SSHv2</div>
<div class="t" style="left:526px;top:211px;width:40px;text-align:right;font:12px 'Liberation Mono';color:#12272e">68</div>
<div class="t" style="left:572px;top:211px;width:361px;overflow:hidden;font:12px 'Liberation Mono';color:#12272e">Client: New Keys</div>
<div style="position:absolute;left:0;top:225px;width:933px;height:14px;background:#e7e6ff"></div>
<div class="t" style="left:22px;top:225px;width:40px;text-align:right;font:12px 'Liberation Mono';color:#12272e">33</div>
<div class="t" style="left:68px;top:225px;font:12px 'Liberation Mono';color:#12272e">8.198299539</div>
<div class="t" style="left:169px;top:225px;font:12px 'Liberation Mono';color:#12272e">192.168.200.177</div>
<div class="t" style="left:320px;top:225px;font:12px 'Liberation Mono';color:#12272e">10.201.3.30</div>
<div class="t" style="left:470px;top:225px;font:12px 'Liberation Mono';color:#12272e">TCP</div>
<div class="t" style="left:526px;top:225px;width:40px;text-align:right;font:12px 'Liberation Mono';color:#12272e">52</div>
<div class="t" style="left:572px;top:225px;width:361px;overflow:hidden;font:12px 'Liberation Mono';color:#12272e">22 → 45108 [ACK] Seq=1272 Ack=1609 Win=34560 Len=0 TSv</div>
<div style="position:absolute;left:0;top:239px;width:933px;height:14px;background:#e7e6ff"></div>
<div class="t" style="left:22px;top:239px;width:40px;text-align:right;font:12px 'Liberation Mono';color:#12272e">34</div>
<div class="t" style="left:68px;top:239px;font:12px 'Liberation Mono';color:#12272e">8.198355974</div>
<div class="t" style="left:169px;top:239px;font:12px 'Liberation Mono';color:#12272e">10.201.3.30</div>
<div class="t" style="left:320px;top:239px;font:12px 'Liberation Mono';color:#12272e">192.168.200.177</div>
<div class="t" style="left:470px;top:239px;font:12px 'Liberation Mono';color:#12272e">SSHv2</div>
<div class="t" style="left:526px;top:239px;width:40px;text-align:right;font:12px 'Liberation Mono';color:#12272e">96</div>
<div class="t" style="left:572px;top:239px;width:361px;overflow:hidden;font:12px 'Liberation Mono';color:#12272e">Client: Encrypted packet (len=44)</div>
<div style="position:absolute;left:0;top:253px;width:933px;height:14px;background:#e7e6ff"></div>
<div class="t" style="left:22px;top:253px;width:40px;text-align:right;font:12px 'Liberation Mono';color:#12272e">35</div>
<div class="t" style="left:68px;top:253px;font:12px 'Liberation Mono';color:#12272e">8.248844176</div>
<div class="t" style="left:169px;top:253px;font:12px 'Liberation Mono';color:#12272e">192.168.200.177</div>
<div class="t" style="left:320px;top:253px;font:12px 'Liberation Mono';color:#12272e">10.201.3.30</div>
<div class="t" style="left:470px;top:253px;font:12px 'Liberation Mono';color:#12272e">TCP</div>
<div class="t" style="left:526px;top:253px;width:40px;text-align:right;font:12px 'Liberation Mono';color:#12272e">52</div>
<div class="t" style="left:572px;top:253px;width:361px;overflow:hidden;font:12px 'Liberation Mono';color:#12272e">22 → 45108 [ACK] Seq=1272 Ack=1653 Win=34560 Len=0 TSv</div>
<div style="position:absolute;left:8px;top:8px;width:6px;height:260px;border-left:1px solid #6a7a80;border-top:1px solid #6a7a80"></div>
</div>
<div style="position:absolute;left:940px;top:203px;width:15px;height:275px;background:#e4e4e4;border-left:1px solid #cfcfcf"></div>
<div style="position:absolute;left:941px;top:203px;width:14px;height:14px;background:#f8f8f8;border-bottom:1px solid #cfcfcf"></div>
<svg style="position:absolute;left:943px;top:207px" width="9" height="5" viewBox="0 0 9 5"><path d="M0 5 L4.5 0 L9 5Z" fill="#555"/></svg>
<div style="position:absolute;left:941px;top:217px;width:14px;height:31px;background:#fafafa;border-bottom:1px solid #cfcfcf"></div>
<div style="position:absolute;left:941px;top:464px;width:14px;height:14px;background:#f8f8f8;border-top:1px solid #cfcfcf"></div>
<svg style="position:absolute;left:943px;top:469px" width="9" height="5" viewBox="0 0 9 5"><path d="M0 0 L4.5 5 L9 0Z" fill="#555"/></svg>
<div style="position:absolute;left:7px;top:478px;width:948px;height:14px;background:#e4e4e4;border-top:1px solid #c9c9c9;border-bottom:1px solid #c9c9c9"></div>
<div style="position:absolute;left:8px;top:479px;width:14px;height:12px;background:#f8f8f8;border-right:1px solid #cfcfcf"></div>
<svg style="position:absolute;left:12px;top:481px" width="5" height="9" viewBox="0 0 5 9"><path d="M5 0 L0 4.5 L5 9Z" fill="#555"/></svg>
<div style="position:absolute;left:22px;top:479px;width:451px;height:12px;background:#fafafa;border-right:1px solid #cfcfcf"></div>
<div style="position:absolute;left:926px;top:479px;width:14px;height:12px;background:#f8f8f8;border-left:1px solid #cfcfcf"></div>
<svg style="position:absolute;left:931px;top:481px" width="5" height="9" viewBox="0 0 5 9"><path d="M0 0 L5 4.5 L0 9Z" fill="#555"/></svg>
<div style="position:absolute;left:940px;top:479px;width:15px;height:12px;background:#efefef;border-left:1px solid #cfcfcf"></div>
<div style="position:absolute;left:7px;top:492px;width:948px;height:5px;background:#efefef;border-bottom:1px solid #c9c9c9"></div>
<div style="position:absolute;left:28px;top:497.5px;width:927px;height:14px;background:#efefef"></div>
<div class="t" style="left:31px;top:497.5px;font:12px 'Liberation Mono';color:#111;color:#111">Frame 17: 60 bytes on wire (480 bits), 60 bytes captured (480 bits) on interface tun0, id 0</div>
<svg style="position:absolute;left:16px;top:500.5px" width="5" height="9" viewBox="0 0 5 9"><path d="M0.5 0.5 L4.5 4.5 L0.5 8.5Z" fill="#555"/></svg>
<div style="position:absolute;left:28px;top:511.5px;width:927px;height:14px;background:#efefef"></div>
<div class="t" style="left:31px;top:511.5px;font:12px 'Liberation Mono';color:#111;color:#111">Raw packet data</div>
<div style="position:absolute;left:28px;top:525.5px;width:927px;height:14px;background:#efefef"></div>
<div class="t" style="left:31px;top:525.5px;font:12px 'Liberation Mono';color:#111;color:#111">Internet Protocol Version 4, Src: 10.201.3.30, Dst: 192.168.200.177</div>
<svg style="position:absolute;left:14px;top:530.5px" width="9" height="5" viewBox="0 0 9 5"><path d="M0.5 0.5 L8.5 0.5 L4.5 4.5Z" fill="#555"/></svg>
<div class="t" style="left:51px;top:539.5px;font:12px 'Liberation Mono';color:#111;color:#111">0100 .... = Version: 4</div>
<div class="t" style="left:51px;top:553.5px;font:12px 'Liberation Mono';color:#111;color:#111">.... 0101 = Header Length: 20 bytes (5)</div>
<div class="t" style="left:51px;top:567.5px;font:12px 'Liberation Mono';color:#111;color:#111">Differentiated Services Field: 0x00 (DSCP: CS0, ECN: Not-ECT)</div>
<svg style="position:absolute;left:36px;top:570.5px" width="5" height="9" viewBox="0 0 5 9"><path d="M0.5 0.5 L4.5 4.5 L0.5 8.5Z" fill="#555"/></svg>
<div class="t" style="left:51px;top:581.5px;font:12px 'Liberation Mono';color:#111;color:#111">Total Length: 60</div>
<div class="t" style="left:51px;top:595.5px;font:12px 'Liberation Mono';color:#111;color:#111">Identification: 0xbffb (49147)</div>
<div class="t" style="left:51px;top:609.5px;font:12px 'Liberation Mono';color:#111;color:#111">Flags: 0x40, Don't fragment</div>
<svg style="position:absolute;left:36px;top:612.5px" width="5" height="9" viewBox="0 0 5 9"><path d="M0.5 0.5 L4.5 4.5 L0.5 8.5Z" fill="#555"/></svg>
<div class="t" style="left:51px;top:623.5px;font:12px 'Liberation Mono';color:#111;color:#111">Fragment Offset: 0</div>
<div style="position:absolute;left:8px;top:637.5px;width:947px;height:14px;background:#2e89c8"></div>
<div class="t" style="left:51px;top:637.5px;font:12px 'Liberation Mono';color:#111;color:#fff">Time to Live: 64</div>
<div class="t" style="left:51px;top:651.5px;font:12px 'Liberation Mono';color:#111;color:#111">Protocol: TCP (6)</div>
<div class="t" style="left:51px;top:665.5px;font:12px 'Liberation Mono';color:#111;color:#111">Header Checksum: 0xe37f [validation disabled]</div>
<div class="t" style="left:51px;top:679.5px;font:12px 'Liberation Mono';color:#111;color:#111">[Header checksum status: Unverified]</div>
<div class="t" style="left:51px;top:693.5px;font:12px 'Liberation Mono';color:#111;color:#111">Source Address: 10.201.3.30</div>
<div class="t" style="left:51px;top:707.5px;font:12px 'Liberation Mono';color:#111;color:#111">Destination Address: 192.168.200.177</div>
<div style="position:absolute;left:28px;top:721.5px;width:927px;height:14px;background:#80b4f2"></div>
<div class="t" style="left:31px;top:721.5px;font:12px 'Liberation Mono';color:#111;color:#111">Transmission Control Protocol, Src Port: 45108, Dst Port: 22, Seq: 0, Len: 0</div>
<svg style="position:absolute;left:16px;top:724.5px" width="5" height="9" viewBox="0 0 5 9"><path d="M0.5 0.5 L4.5 4.5 L0.5 8.5Z" fill="#555"/></svg>
<div style="position:absolute;left:7px;top:838px;width:948px;height:6px;background:#efefef;border-top:1px solid #c4c4c4;border-bottom:1px solid #c4c4c4"></div>
<div style="position:absolute;left:8px;top:844px;width:42px;height:185px;background:#efefef"></div>
<div style="position:absolute;left:58px;top:844px;width:345.6px;height:14px;background:#efefef"></div>
<div style="position:absolute;left:58px;top:858px;width:79.2px;height:14px;background:#efefef"></div>
<div style="position:absolute;left:424.5px;top:844px;width:57.6px;height:14px;background:#efefef"></div>
<div style="position:absolute;left:424.5px;top:858px;width:28.8px;height:14px;background:#efefef"></div>
<div style="position:absolute;left:238.0px;top:844px;width:14.4px;height:14px;background:#2e89c8"></div>
<div class="t" style="left:15px;top:844px;font:12px 'Liberation Mono';color:#111;color:#333">0000</div>
<div class="t" style="left:58px;top:844px;font:12px 'Liberation Mono';color:#111">45 00 00 3c bf fb 40 00  40 06 e3 7f 0a c9 03 1e</div>
<div class="t" style="left:15px;top:858px;font:12px 'Liberation Mono';color:#111;color:#9a9a9a">0010</div>
<div class="t" style="left:58px;top:858px;font:12px 'Liberation Mono';color:#111">c0 a8 c8 b1 b0 34 00 16  35 e7 83 7e 00 00 00 00</div>
<div class="t" style="left:15px;top:872px;font:12px 'Liberation Mono';color:#111;color:#9a9a9a">0020</div>
<div class="t" style="left:58px;top:872px;font:12px 'Liberation Mono';color:#111">a0 02 fa f0 3a a1 00 00  02 04 05 b4 04 02 08 0a</div>
<div class="t" style="left:15px;top:886px;font:12px 'Liberation Mono';color:#111;color:#9a9a9a">0030</div>
<div class="t" style="left:58px;top:886px;font:12px 'Liberation Mono';color:#111">4a da c6 a2 00 00 00 00  01 03 03 07</div>
<div style="position:absolute;left:238.0px;top:844px;width:14.4px;height:14px;background:#2e89c8"></div>
<div class="t" style="left:238.0px;top:844px;font:12px 'Liberation Mono';color:#111;color:#fff">40</div>
<div class="t" style="left:424.5px;top:844px;font:12px 'Liberation Mono';color:#111">E<span style="color:#b0b0b0">·</span><span style="color:#b0b0b0">·</span>&lt;<span style="color:#b0b0b0">·</span><span style="color:#b0b0b0">·</span>@<span style="color:#b0b0b0">·</span></div>
<div class="t" style="left:424.5px;top:858px;font:12px 'Liberation Mono';color:#111"><span style="color:#b0b0b0">·</span><span style="color:#b0b0b0">·</span><span style="color:#b0b0b0">·</span><span style="color:#b0b0b0">·</span><span style="color:#b0b0b0">·</span>4<span style="color:#b0b0b0">·</span><span style="color:#b0b0b0">·</span></div>
<div class="t" style="left:424.5px;top:872px;font:12px 'Liberation Mono';color:#111"><span style="color:#b0b0b0">·</span><span style="color:#b0b0b0">·</span><span style="color:#b0b0b0">·</span><span style="color:#b0b0b0">·</span>:<span style="color:#b0b0b0">·</span><span style="color:#b0b0b0">·</span><span style="color:#b0b0b0">·</span></div>
<div class="t" style="left:424.5px;top:886px;font:12px 'Liberation Mono';color:#111">J<span style="color:#b0b0b0">·</span><span style="color:#b0b0b0">·</span><span style="color:#b0b0b0">·</span><span style="color:#b0b0b0">·</span><span style="color:#b0b0b0">·</span><span style="color:#b0b0b0">·</span><span style="color:#b0b0b0">·</span> <span style="color:#b0b0b0">·</span><span style="color:#b0b0b0">·</span><span style="color:#b0b0b0">·</span><span style="color:#b0b0b0">·</span></div>
<div style="position:absolute;left:7px;top:1029px;width:948px;height:22px;background:#efefef;border-top:1px solid #cacaca"></div>
<svg style="position:absolute;left:16px;top:1032px" width="15" height="15" viewBox="0 0 15 15"><circle cx="7.5" cy="7.5" r="6.7" fill="#dcd84a" stroke="#8d8a2a" stroke-width="0.8"/></svg>
<svg style="position:absolute;left:39px;top:1032px" width="15" height="15" viewBox="0 0 15 15"><rect x="1" y="2" width="11" height="12" fill="#f4f4f4" stroke="#aaa" stroke-width="0.7"/><rect x="1" y="2" width="6" height="4" fill="#3b8fe0"/><path d="M6 10 L13 2 L14 3 L7 11 L5.5 11.5Z" fill="#333"/></svg>
<div class="t" style="left:70px;top:1033px;font:13.5px 'Liberation Sans';color:#1a1a1a">Time to Live (ip.ttl), 1 byte</div>
<div style="position:absolute;left:582px;top:1034px;width:1px;height:14px;border-left:1px dotted #bbb"></div>
<div style="position:absolute;left:825px;top:1034px;width:1px;height:14px;border-left:1px dotted #bbb"></div>
<div style="position:absolute;left:950px;top:1034px;width:1px;height:14px;border-left:1px dotted #bbb"></div>
<div class="t" style="left:595px;top:1033px;font:13.5px 'Liberation Sans';color:#1a1a1a">Packets: 200 · Displayed: 86 (43.0%)</div>
<div class="t" style="left:838px;top:1033px;font:13.5px 'Liberation Sans';color:#1a1a1a">Profile: Default</div>
<div style="position:absolute;left:960px;top:86px;width:960px;height:972px;background:#1c1d22"></div>
<div style="position:absolute;left:1910px;top:86px;width:10px;height:972px;background:#1c2030"></div>
<div style="position:absolute;left:1911px;top:217px;width:7px;height:839px;background:linear-gradient(90deg,#f0f0f0,#d0d0d0)"></div>
<div style="position:absolute;left:1903px;top:1047px;width:15px;height:9px;background:linear-gradient(90deg,#e8e8e8,#d4d4d4)"></div>
<svg style="position:absolute;left:1906px;top:1047px" width="6" height="5" viewBox="0 0 6 5"><path d="M6 0 L0 5 L6 5Z" fill="#444"/></svg>
<div style="position:absolute;left:1917px;top:86px;width:3px;height:131px;background:#4a6cb8"></div>
<div style="position:absolute;left:960px;top:1047px;width:546px;height:10px;background:#1f1f1f"></div>
<div style="position:absolute;left:1506px;top:1047px;width:2px;height:9px;background:#444"></div>
<div style="position:absolute;left:1508px;top:1047px;width:30px;height:9px;background:#0d1616"></div>
<div style="position:absolute;left:1538px;top:1047px;width:365px;height:9px;background:linear-gradient(90deg,#007880,#0f848a 40%,#007a82)"></div>
<div style="position:absolute;left:0px;top:1056px;width:1920px;height:2px;background:#00000c"></div>
<div style="position:absolute;left:961px;top:87px;width:949px;height:961px;background:#22252e;border-radius:4px 4px 0 0"></div>
<div style="position:absolute;left:972px;top:93px;width:17px;height:14px;background:#111;border:1.5px solid #aaa;border-radius:2px"></div>
<div style="position:absolute;left:975px;top:96px;width:1px;height:2px;background:#ccc"></div>
<div class="t" style="left:1302px;top:91px;font:bold 14.2px 'Liberation Sans';color:#9a9ea8">ssh -l root lcd.hacking-lab.com</div>
<svg style="position:absolute;left:1825px;top:94px" width="80" height="14" viewBox="0 0 80 14"><path d="M0 8.5 L4 4 L8 8.5Z" fill="#aaa"/><rect x="22" y="8.5" width="8" height="2.5" fill="#aaa"/><rect x="45" y="3" width="6" height="6" fill="none" stroke="#aaa" stroke-width="2"/><path d="M66.5 2.5 L73.5 9.5 M73.5 2.5 L66.5 9.5" stroke="#aaa" stroke-width="2.2"/></svg>
<div class="t" style="left:974px;top:119px;font:15px 'Liberation Sans';color:#8796aa">File</div>
<div class="t" style="left:1015px;top:119px;font:15px 'Liberation Sans';color:#8796aa">Edit</div>
<div class="t" style="left:1056px;top:119px;font:15px 'Liberation Sans';color:#8796aa">View</div>
<div class="t" style="left:1105px;top:119px;font:15px 'Liberation Sans';color:#8796aa">Terminal</div>
<div class="t" style="left:1181px;top:119px;font:15px 'Liberation Sans';color:#8796aa">Tabs</div>
<div class="t" style="left:1229px;top:119px;font:15px 'Liberation Sans';color:#8796aa">Help</div>
<div style="position:absolute;left:964px;top:140px;width:941px;height:903px;background:#221e2e"></div>
<div style="position:absolute;left:1538px;top:216px;width:349px;height:827px;background:#22233a"></div>
<div style="position:absolute;left:1538px;top:216px;width:349px;height:827px;overflow:hidden"><div style="position:absolute;left:-40px;top:230px;width:160px;height:520px;border-radius:50%;background:rgba(58,48,56,0.45);filter:blur(24px)"></div></div>
<div style="position:absolute;left:1894px;top:140px;width:16px;height:903px;background:#272830"></div>
<div style="position:absolute;left:1896px;top:144px;width:7px;height:896px;background:#50545c;border-radius:4px"></div>
<div style="position:absolute;left:964px;top:140px;width:700px;height:900px;overflow:hidden">
<div class="t" style="left:2px;top:83px;font:13.5px 'Liberation Sans';color:#2f2a3c">capture many of the popular protocols and learn how they are operating.</div>
<div class="t" style="left:0px;top:472px;font:13.5px 'Liberation Sans';color:#2f2a3c">. cap ).</div>
<div class="t" style="left:-6px;top:696px;font:13.5px 'Liberation Sans';color:#2f2a3c">and analyse network traffic with Wireshark. The goal of this challenge is to get familiar with</div>
<div class="t" style="left:-3px;top:732px;font:13.5px 'Liberation Sans';color:#2f2a3c">s challenge description.</div>
<div class="t" style="left:-6px;top:804px;font:13.5px 'Liberation Sans';color:#2f2a3c">rypted password.</div>
<div class="t" style="left:-7px;top:876px;font:13.5px 'Liberation Sans';color:#2f2a3c">om. The required password is "compass".</div>
</div>
<svg style="position:absolute;left:1687px;top:156px" width="18" height="18" viewBox="0 0 18 18"><path d="M9 1 L11.3 6.5 L17 7 L12.7 10.8 L14 16.5 L9 13.5 L4 16.5 L5.3 10.8 L1 7 L6.7 6.5Z" fill="none" stroke="#2d2a3a" stroke-width="1.5"/></svg>
<svg style="position:absolute;left:1727px;top:156px" width="18" height="18" viewBox="0 0 18 18"><circle cx="9" cy="9" r="7" fill="none" stroke="#2d2a3a" stroke-width="3"/></svg>
<svg style="position:absolute;left:1759px;top:158px" width="14" height="14" viewBox="0 0 14 14"><path d="M7 1 L9 5 L13 6 L10 9 L11 13 L7 11 L3 13 L4 9 L1 6 L5 5Z" fill="#2a2736"/></svg>
<svg style="position:absolute;left:1791px;top:156px" width="18" height="18" viewBox="0 0 18 18"><circle cx="9" cy="9" r="8" fill="#2d2a3a"/><circle cx="9" cy="9" r="3" fill="#221e2e"/></svg>
<svg style="position:absolute;left:1822px;top:156px" width="18" height="18" viewBox="0 0 18 18"><path d="M3 6 L7 6 Q7 2 9.5 2 Q12 2 12 6 L16 6 L16 10 Q12 10 12 12.5 Q12 15 16 15 L16 17 L3 17Z" fill="#2d2a3a"/></svg>
<svg style="position:absolute;left:1853px;top:154px" width="22" height="22" viewBox="0 0 22 22"><circle cx="11" cy="11" r="10" fill="none" stroke="#2d2a3a" stroke-width="2"/><circle cx="11" cy="8.5" r="3.5" fill="#2d2a3a"/><path d="M4.5 17 Q11 11 17.5 17" fill="#2d2a3a"/></svg>
<div style="position:absolute;left:966px;top:142px;width:27px;height:18px;background:#b35a00"></div>
<svg style="position:absolute;left:993px;top:142px" width="8" height="18" viewBox="0 0 8 18"><path d="M0 0 L8 9 L0 18Z" fill="#b35a00"/></svg>
<div class="t" style="left:975px;top:144px;font:bold 14px 'Liberation Mono';color:#fff">~</div>
<svg style="position:absolute;left:1848px;top:142px" width="9" height="18" viewBox="0 0 9 18"><path d="M9 0 L0 9 L9 18Z" fill="#b35a00"/></svg>
<div style="position:absolute;left:1857px;top:142px;width:27px;height:18px;background:#b35a00"></div>
<div class="t" style="left:1864px;top:143px;font:14px 'Liberation Sans';color:#fff">✔</div>
<div class="t" style="left:966px;top:143px;font:15px 'Liberation Mono';color:#ececec;line-height:18px">     ssh -l root lcd.hacking-lab.com</div>
<div class="t" style="left:966px;top:161px;font:15px 'Liberation Mono';color:#ececec;line-height:18px">root@lcd.hacking-lab.com's password:</div>
<div class="t" style="left:966px;top:197px;font:15px 'Liberation Mono';color:#ececec;line-height:18px">The programs included with the Debian GNU/Linux system are free software;</div>
<div class="t" style="left:966px;top:215px;font:15px 'Liberation Mono';color:#ececec;line-height:18px">the exact distribution terms for each program are described in the</div>
<div class="t" style="left:966px;top:233px;font:15px 'Liberation Mono';color:#ececec;line-height:18px">individual files in /usr/share/doc/*/copyright.</div>
<div class="t" style="left:966px;top:269px;font:15px 'Liberation Mono';color:#ececec;line-height:18px">Debian GNU/Linux comes with ABSOLUTELY NO WARRANTY, to the extent</div>
<div class="t" style="left:966px;top:287px;font:15px 'Liberation Mono';color:#ececec;line-height:18px">permitted by applicable law.</div>
<div class="t" style="left:966px;top:305px;font:15px 'Liberation Mono';color:#ececec;line-height:18px">Last login: Tue Apr 12 04:52:40 2016</div>
<div class="t" style="left:966px;top:323px;font:15px 'Liberation Mono';color:#ececec;line-height:18px">root@HL-LCD:~# ip addr</div>
<div class="t" style="left:966px;top:341px;font:15px 'Liberation Mono';color:#ececec;line-height:18px">1: lo: &lt;LOOPBACK,UP,LOWER_UP&gt; mtu 65536 qdisc noqueue state UNKNOWN group default</div>
<div class="t" style="left:966px;top:359px;font:15px 'Liberation Mono';color:#ececec;line-height:18px">    link/loopback 00:00:00:00:00:00 brd 00:00:00:00:00:00</div>
<div class="t" style="left:966px;top:377px;font:15px 'Liberation Mono';color:#ececec;line-height:18px">    inet 127.0.0.1/8 scope host lo</div>
<div class="t" style="left:966px;top:395px;font:15px 'Liberation Mono';color:#ececec;line-height:18px">       valid_lft forever preferred_lft forever</div>
<div class="t" style="left:966px;top:413px;font:15px 'Liberation Mono';color:#ececec;line-height:18px">    inet6 ::1/128 scope host</div>
<div class="t" style="left:966px;top:431px;font:15px 'Liberation Mono';color:#ececec;line-height:18px">       valid_lft forever preferred_lft forever</div>
<div class="t" style="left:966px;top:449px;font:15px 'Liberation Mono';color:#ececec;line-height:18px">2: eth0: &lt;BROADCAST,MULTICAST,UP,LOWER_UP&gt; mtu 1500 qdisc pfifo_fast state UP group default qlen 1000</div>
<div class="t" style="left:966px;top:467px;font:15px 'Liberation Mono';color:#ececec;line-height:18px">    link/ether 00:0c:29:16:d3:92 brd ff:ff:ff:ff:ff:ff</div>
<div class="t" style="left:966px;top:485px;font:15px 'Liberation Mono';color:#ececec;line-height:18px">    inet 192.168.200.177/24 brd 192.168.200.255 scope global eth0</div>
<div class="t" style="left:966px;top:503px;font:15px 'Liberation Mono';color:#ececec;line-height:18px">       valid_lft forever preferred_lft forever</div>
<div class="t" style="left:966px;top:521px;font:15px 'Liberation Mono';color:#ececec;line-height:18px">    inet6 fe80::20c:29ff:fe16:d392/64 scope link</div>
<div class="t" style="left:966px;top:539px;font:15px 'Liberation Mono';color:#ececec;line-height:18px">       valid_lft forever preferred_lft forever</div>
<div class="t" style="left:966px;top:557px;font:15px 'Liberation Mono';color:#ececec;line-height:18px">root@HL-LCD:~# </div>
<div style="position:absolute;left:1101px;top:556px;width:10px;height:18px;border:1px solid #eee"></div>
<div style="position:absolute;left:0px;top:1058px;width:1920px;height:22px;background:#efefef"></div>
<div class="t" style="left:1839px;top:1061px;font:14px 'Liberation Sans';color:#222">Right Ctrl</div>
<svg style="position:absolute;left:1687px;top:1061px" width="14" height="16" viewBox="0 0 14 16"><rect x="0.5" y="0.5" width="13" height="15" rx="1.5" fill="#3e9be8" stroke="#1f5fb0"/><circle cx="6.5" cy="7" r="4.5" fill="none" stroke="#fff" stroke-width="1.6"/><circle cx="6.5" cy="7" r="1" fill="#fff"/><path d="M8 10 L11 13" stroke="#fff" stroke-width="1.4"/></svg>
<svg style="position:absolute;left:1705px;top:1061px" width="17" height="16" viewBox="0 0 17 16"><rect x="6" y="0.5" width="10" height="8" fill="#3e9be8" stroke="#555"/><rect x="0.5" y="5.5" width="10" height="8" fill="#3e9be8" stroke="#555"/><rect x="3" y="13.5" width="5" height="2" fill="#888"/></svg>
<svg style="position:absolute;left:1725px;top:1062px" width="15" height="14" viewBox="0 0 15 14"><path d="M0.5 2 L6 2 L7 0.5 L14.5 0.5 L14.5 13.5 L0.5 13.5Z" fill="#d8d8d8" stroke="#c4c4c4"/></svg>
<svg style="position:absolute;left:1744px;top:1061px" width="16" height="16" viewBox="0 0 16 16"><rect x="0.5" y="0.5" width="15" height="12" fill="#fff" stroke="#555"/><rect x="2.5" y="2.5" width="11" height="8" fill="#3e9be8"/><rect x="5" y="5" width="6" height="3" fill="#fff" stroke="#1f5fb0" stroke-width="0.6"/><rect x="4" y="13" width="8" height="2.5" fill="#888"/></svg>
<svg style="position:absolute;left:1763px;top:1061px" width="16" height="16" viewBox="0 0 16 16"><rect x="5.5" y="0.5" width="10" height="8" rx="1" fill="#7fb6f0" stroke="#3a6fb8"/><rect x="0.5" y="6.5" width="10" height="9" fill="#2f80e0" stroke="#555"/></svg>
<svg style="position:absolute;left:1782px;top:1061px" width="17" height="16" viewBox="0 0 17 16"><rect x="1" y="0.5" width="10" height="15" fill="#6f86e0" stroke="#3a4fb0"/><text x="2.5" y="12" font-family='Liberation Sans' font-weight="bold" font-size="11" fill="#fff">V</text><rect x="12.5" y="1" width="3" height="14" fill="#fff" stroke="#111" stroke-width="1.2"/></svg>
<svg style="position:absolute;left:1801px;top:1061px" width="17" height="16" viewBox="0 0 17 16"><ellipse cx="7.5" cy="8" rx="7" ry="7.5" fill="#6fb2ea" stroke="#2f6fb8" stroke-width="0.8"/><path d="M7 3 L14 9 L8 15 L5 12 L9 9 L4 5Z" fill="#5cc82c" stroke="#2f8a1f" stroke-width="0.6"/></svg>
<svg style="position:absolute;left:1820px;top:1061px" width="16" height="16" viewBox="0 0 16 16"><rect x="0.5" y="0.5" width="15" height="15" rx="2" fill="#4aa0ee" stroke="#1f5fb0"/><path d="M6.5 3 L9.5 3 L9.5 8 L12 8 L8 12.5 L4 8 L6.5 8Z" fill="#0f2f70"/></svg>
</body></html>
